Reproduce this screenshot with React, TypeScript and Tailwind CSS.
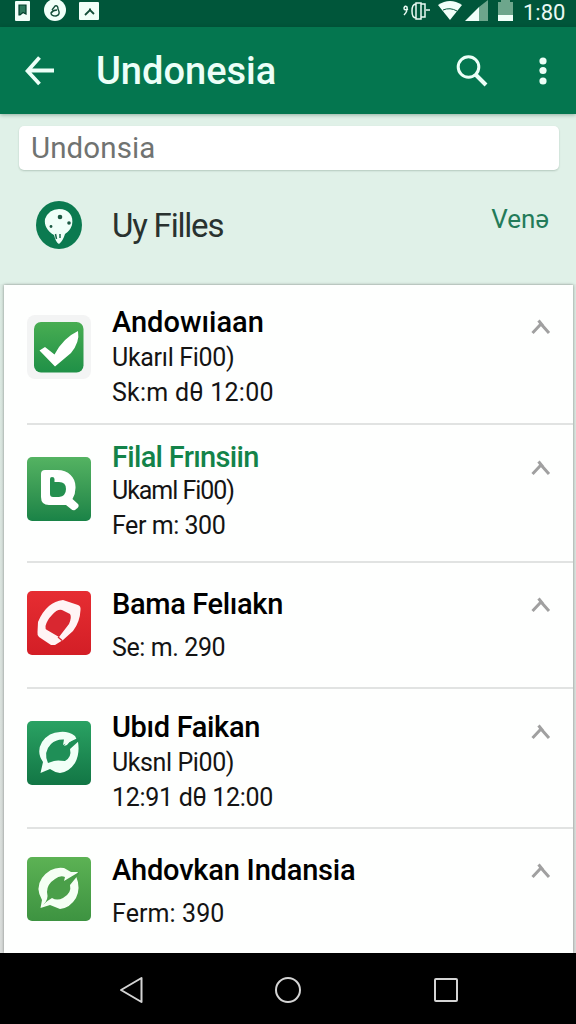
import React from 'react';

type IconKind = 'check' | 'search' | 'ring' | 'sync' | 'leaf';

interface FileItem {
  title: string;
  titleClass: string;
  lines: { text: string; className: string }[];
  icon: IconKind;
  rowClass: string;
  iconClass: string;
  chevronClass: string;
}

const items: FileItem[] = [
  {
    title: 'Andowıiaan',
    titleClass: 'text-black',
    lines: [
      { text: 'Ukarıl Fi00)', className: 'tracking-[-0.3px]' },
      { text: 'Sk:m dθ 12:00', className: 'tracking-[0.25px]' },
    ],
    icon: 'check',
    rowClass: 'h-[140px] pt-[19px]',
    iconClass: 'mt-[11px]',
    chevronClass: 'mt-[15px]',
  },
  {
    title: 'Filal Frınsiin',
    titleClass: 'text-[#138349] tracking-[-0.7px]',
    lines: [
      { text: 'Ukaml Fi00)', className: 'mt-[-2px] tracking-[-1.05px]' },
      { text: 'Fer m: 300', className: 'tracking-[-0.45px]' },
    ],
    icon: 'search',
    rowClass: 'h-[138px] pt-[14px]',
    iconClass: 'mt-[18px]',
    chevronClass: 'mt-[21px]',
  },
  {
    title: 'Bama Felıakn',
    titleClass: 'text-black tracking-[-0.35px]',
    lines: [{ text: 'Se: m. 290', className: 'mt-[8px] tracking-[-0.4px]' }],
    icon: 'ring',
    rowClass: 'h-[126px] pt-[23px]',
    iconClass: 'mt-[5px]',
    chevronClass: 'mt-[11px]',
  },
  {
    title: 'Ubıd Faikan',
    titleClass: 'text-black tracking-[-0.35px]',
    lines: [
      { text: 'Uksnl Pi00)', className: 'tracking-[-0.4px]' },
      { text: '12:91 dθ 12:00', className: 'tracking-[-0.3px]' },
    ],
    icon: 'sync',
    rowClass: 'h-[140px] pt-[20px]',
    iconClass: 'mt-[12px]',
    chevronClass: 'mt-[15px]',
  },
  {
    title: 'Ahdovkan Indansia',
    titleClass: 'text-black tracking-[-0.2px]',
    lines: [{ text: 'Ferm: 390', className: 'mt-[8px] tracking-[0.1px]' }],
    icon: 'leaf',
    rowClass: 'h-[124px] pt-[23px]',
    iconClass: 'mt-[5px]',
    chevronClass: 'mt-[11px]',
  },
];

const tileColors: Record<IconKind, string> = {
  check: 'bg-[#f3f4f4]',
  search: 'bg-linear-to-b from-[#54b362] to-[#198347]',
  ring: 'bg-linear-to-b from-[#e62d32] to-[#d31e26]',
  sync: 'bg-linear-to-b from-[#2aa263] to-[#127645]',
  leaf: 'bg-linear-to-b from-[#5cb254] to-[#3d9341]',
};

function TileArt({ kind }: { kind: IconKind }) {
  switch (kind) {
    case 'check':
      return (
        <>
          <defs>
            <linearGradient id="checkFill" x1="0" y1="0" x2="0" y2="1">
              <stop offset="0" stopColor="#48ad52" />
              <stop offset="1" stopColor="#1f9047" />
            </linearGradient>
          </defs>
          <rect x="7" y="7" width="49.500" height="50.500" rx="7" fill="url(#checkFill)" />
          <path
            d="M12.500 35.500L18 32L27.500 39.500Q36 23 51 16Q53 27 44 38L28 51.500Z"
            fill="#fff"
          />
        </>
      );
    case 'search':
      return (
        <>
          <path
            d="M14 17Q14 13 18 13H30C42 13 49 21 48.500 31Q48.500 37 45.500 42L51 47Q52.500 49 50.500 51L48 53Q46 54 44 52L39 48H22Q14 48 14 40Z"
            fill="#fff"
          />
          <path
            d="M23 22Q23 20 25 20Q27.500 20 27.500 22V25H32Q39 25 39 32T32 40H26Q23 40 23 37Z"
            fill="#249050"
          />
        </>
      );
    case 'ring':
      return (
        <>
          <path
            d="M22 15Q28 10 36 9L51 14Q54 15 53.500 19Q53 31 46 40L36 49L28 54H24L12 46Q10 44 10.500 41L11 31Q15 21 22 15Z"
            fill="#fff4f5"
          />
          <path
            d="M25 24Q30 18 35 19L43 23Q45 26 42 33L32 46L20 39Q18 38 18.500 35Q20 29 25 24Z"
            fill="#d92730"
          />
          <path d="M31 46L35 49.500" stroke="#d92730" strokeWidth="1.300" />
        </>
      );
    case 'sync':
      return (
        <>
          <path
            d="M13.500 52L16 41Q9 31 15 21Q22 11 33 11Q41 10 48 15L51 21Q53 33 48 42Q42 51 33 52Q27 51 23 48Z"
            fill="#f1fff7"
          />
          <path
            d="M21 42Q16 31 24 23Q29 18 37 18.500L36 24L53 16V19L43 28Q45 36 38 40Q30 39 27 40Q24 41 21 42Z"
            fill="#1f8f57"
          />
          <path d="M37 25Q40 19 48 15L47 18Q43 20 40 24Z" fill="#f1fff7" />
        </>
      );
    case 'leaf':
      return (
        <>
          <path
            d="M13.500 51L15 43Q8 31 15 21Q24 9 37 11L44 15H51L49 19Q54 31 49 41Q43 51 33 52L23 48Z"
            fill="#f5fff4"
          />
          <path
            d="M16 48Q22 43 20 35Q20 27 28 22Q33 18 38 20L37 24L52 15V17L43 28Q45 36 36 41Q30 44 25 41Q21 43 16 48Z"
            fill="#4a9f49"
          />
        </>
      );
  }
}

function AppTile({ kind, className }: { kind: IconKind; className: string }) {
  return (
    <div
      className={`h-16 w-16 shrink-0 overflow-hidden ${
        kind === 'check' ? 'rounded-[8px]' : 'rounded-[5px]'
      } ${tileColors[kind]} ${className}`}
    >
      <svg viewBox="0 0 64 64" className="block h-16 w-16">
        <TileArt kind={kind} />
      </svg>
    </div>
  );
}

function StatusBar() {
  return (
    <div className="flex h-[27px] items-start justify-between bg-[#00563a] pl-[15px] pr-[9px]">
      <svg viewBox="0 0 86 21" className="block h-[21px] w-[86px]">
        <rect y="1" width="15" height="20" rx="1" fill="#f1fff9" />
        <path d="M4 5H11V14L8 12.500L5 15H4Z" fill="#2c7a5d" stroke="#00402c" strokeWidth="1.200" />
        <circle cx="40" cy="10" r="11" fill="#f1fff9" />
        <path d="M37 10L40 6Q43 5 43 9Q46 15 41 16Q36 16 36 13Q38 10 42 10" fill="none" stroke="#124c38" strokeWidth="1.400" />
        <rect x="64" y="2" width="20" height="18" rx="1" fill="#f1fff9" />
        <path d="M70 15L75 10L79 14M74 9.500H76" fill="none" stroke="#124c38" strokeWidth="1.800" />
      </svg>
      <div className="flex">
        <svg viewBox="0 0 112 22" className="block h-[22px] w-[112px]">
          <g fill="none" stroke="#e9faf3" strokeWidth="1.500">
            <path d="M5 9Q1 11 1 8Q2 5 4 7Q5 11 1 15" />
            <path d="M13 4Q9 4 9 11Q9 18 13 18M13 3H18V19H13ZM18 4H22V17H18M23 10H27" />
          </g>
          <path d="M35 5Q47 -3 59 5L47 20Z" fill="#f1fff9" />
          <path d="M40 10Q47 7 54 11" fill="none" stroke="#00563a" strokeWidth="1" />
          <path d="M76 7L85 0V21H76Z" fill="#6da68c" />
          <path d="M62 21L76 7V21Z" fill="#f1fff9" />
          <path d="M95 2H98V0H107V2H110V15H95Z" fill="#6da68c" />
          <rect x="95" y="15" width="15" height="6" fill="#f1fff9" />
        </svg>
        <span className="ml-[8px] w-[44px] whitespace-nowrap text-[22px] leading-[26px] text-[#e9faf3]">
          1:80
        </span>
      </div>
    </div>
  );
}

function AppBar() {
  return (
    <header className="relative z-10 flex h-[87px] items-center bg-[#04764f] shadow-[0_1px_4px_rgba(0,50,30,0.35)]">
      <button type="button" aria-label="Back" className="ml-[25px]">
        <svg viewBox="0 0 30 30" className="block h-[30px] w-[30px]" fill="none" stroke="#ecfff7" strokeWidth="3.800">
          <path d="M14.500 1.500L2.500 15L14.500 28M3 14.500H29" />
        </svg>
      </button>
      <h1 className="ml-[41px] flex-1 whitespace-nowrap text-[38px] font-medium leading-[44px] text-[#ecfff8]">
        Undonesia
      </h1>
      <button type="button" aria-label="Search" className="mr-[51px]">
        <svg viewBox="0 0 32 32" className="block h-8 w-8" fill="none" stroke="#ecfff7">
          <circle cx="12.500" cy="12" r="10.300" strokeWidth="3" />
          <path d="M19.500 19.500L30 30" strokeWidth="4" />
        </svg>
      </button>
      <button type="button" aria-label="More" className="mr-[29px]">
        <svg viewBox="0 0 8 28" className="block h-7 w-2" fill="#ecfff7">
          <circle cx="4" cy="4" r="3.600" />
          <circle cx="4" cy="13.500" r="3.600" />
          <circle cx="4" cy="24" r="3.600" />
        </svg>
      </button>
    </header>
  );
}

function Section() {
  return (
    <div className="flex h-[114px] items-start pl-9 pr-[27px]">
      <svg viewBox="0 0 46 48" className="mt-[31px] block h-12 w-[46px] shrink-0">
        <ellipse cx="23" cy="24" rx="23" ry="24" fill="#0b7a50" />
        <path
          d="M23 8C33 8 38 15 36 24Q34 30 29 33Q27 40 23 43Q20 42 18 34C11 30 8 24 9 18Q13 8 23 8Z"
          fill="#f0fff9"
        />
        <circle cx="24" cy="16" r="2.300" fill="#1d5944" />
        <circle cx="15" cy="25.500" r="1.400" fill="#1d5944" />
        <circle cx="33" cy="22" r="1.800" fill="#1d5944" />
        <path d="M19.500 33L20.500 38M24 33V37" fill="none" stroke="#1d6b4e" strokeWidth="1.500" />
      </svg>
      <h2 className="ml-[30px] mt-[36px] flex-1 whitespace-nowrap text-[33px] leading-[40px] tracking-[-1.2px] text-[#29322f]">
        Uy Filles
      </h2>
      <span className="mt-[33px] whitespace-nowrap text-[26px] leading-[32px] text-[#237b59]">Venə</span>
    </div>
  );
}

function Row({ item, last }: { item: FileItem; last: boolean }) {
  return (
    <li
      className={`ml-[23px] flex items-start ${item.rowClass} ${last ? '' : 'border-b-2 border-[#e1e3e2]'}`}
    >
      <AppTile kind={item.icon} className={item.iconClass} />
      <div className="ml-[21px] flex-1 whitespace-nowrap">
        <h3 className={`text-[29px] font-medium leading-[36px] ${item.titleClass}`}>{item.title}</h3>
        {item.lines.map((line) => (
          <p key={line.text} className={`text-[25px] leading-[35px] text-[#141414] ${line.className}`}>
            {line.text}
          </p>
        ))}
      </div>
      <svg
        viewBox="0 0 20 16"
        className={`mr-[22px] block h-4 w-5 ${item.chevronClass}`}
        fill="none"
        stroke="#a0a0a0"
        strokeWidth="3"
      >
        <path d="M1.500 14L10 5L18 14M7.500 1.500L12 7" />
      </svg>
    </li>
  );
}

function NavBar() {
  return (
    <nav className="flex h-[71px] items-center bg-black pl-[119px] pt-[3px]">
      <svg viewBox="0 0 24 28" className="block h-7 w-6" fill="none" stroke="#d4d4d4" strokeWidth="2">
        <path d="M2 14L22.500 2V26Z" strokeLinejoin="round" />
      </svg>
      <svg viewBox="0 0 28 28" className="ml-[131px] block h-7 w-7" fill="none" stroke="#d4d4d4" strokeWidth="2">
        <circle cx="14" cy="14" r="12" />
      </svg>
      <svg viewBox="0 0 26 26" className="ml-[131px] block h-[26px] w-[26px]" fill="none" stroke="#d4d4d4" strokeWidth="2">
        <rect x="2" y="2" width="22" height="22" rx="1" />
      </svg>
    </nav>
  );
}

export default function App() {
  return (
    <div className="flex h-[1024px] w-[576px] flex-col overflow-hidden bg-[#e0f1e8] font-['Roboto',sans-serif]">
      <StatusBar />
      <AppBar />
      <div className="px-[19px] pt-[12px]">
        <input
          type="text"
          aria-label="Search files"
          defaultValue="Undonsia"
          className="block h-[44px] w-[540px] rounded-[5px] bg-white px-3 text-[29.5px] tracking-[0.1px] text-[#707371] shadow-[0_1px_2px_rgba(0,40,20,0.2)] outline-none"
        />
      </div>
      <Section />
      <main className="h-[669px] bg-linear-to-b from-[#dcebe3] to-[#dadddb] pl-[4px] pr-[3px] pt-[1px]">
        <ul className="h-[668px] bg-[#fefffe] shadow-[0_0_3px_rgba(0,0,0,0.4)]">
          {items.map((item, i) => (
            <Row key={item.title} item={item} last={i === items.length - 1} />
          ))}
        </ul>
      </main>
      <NavBar />
    </div>
  );
}
